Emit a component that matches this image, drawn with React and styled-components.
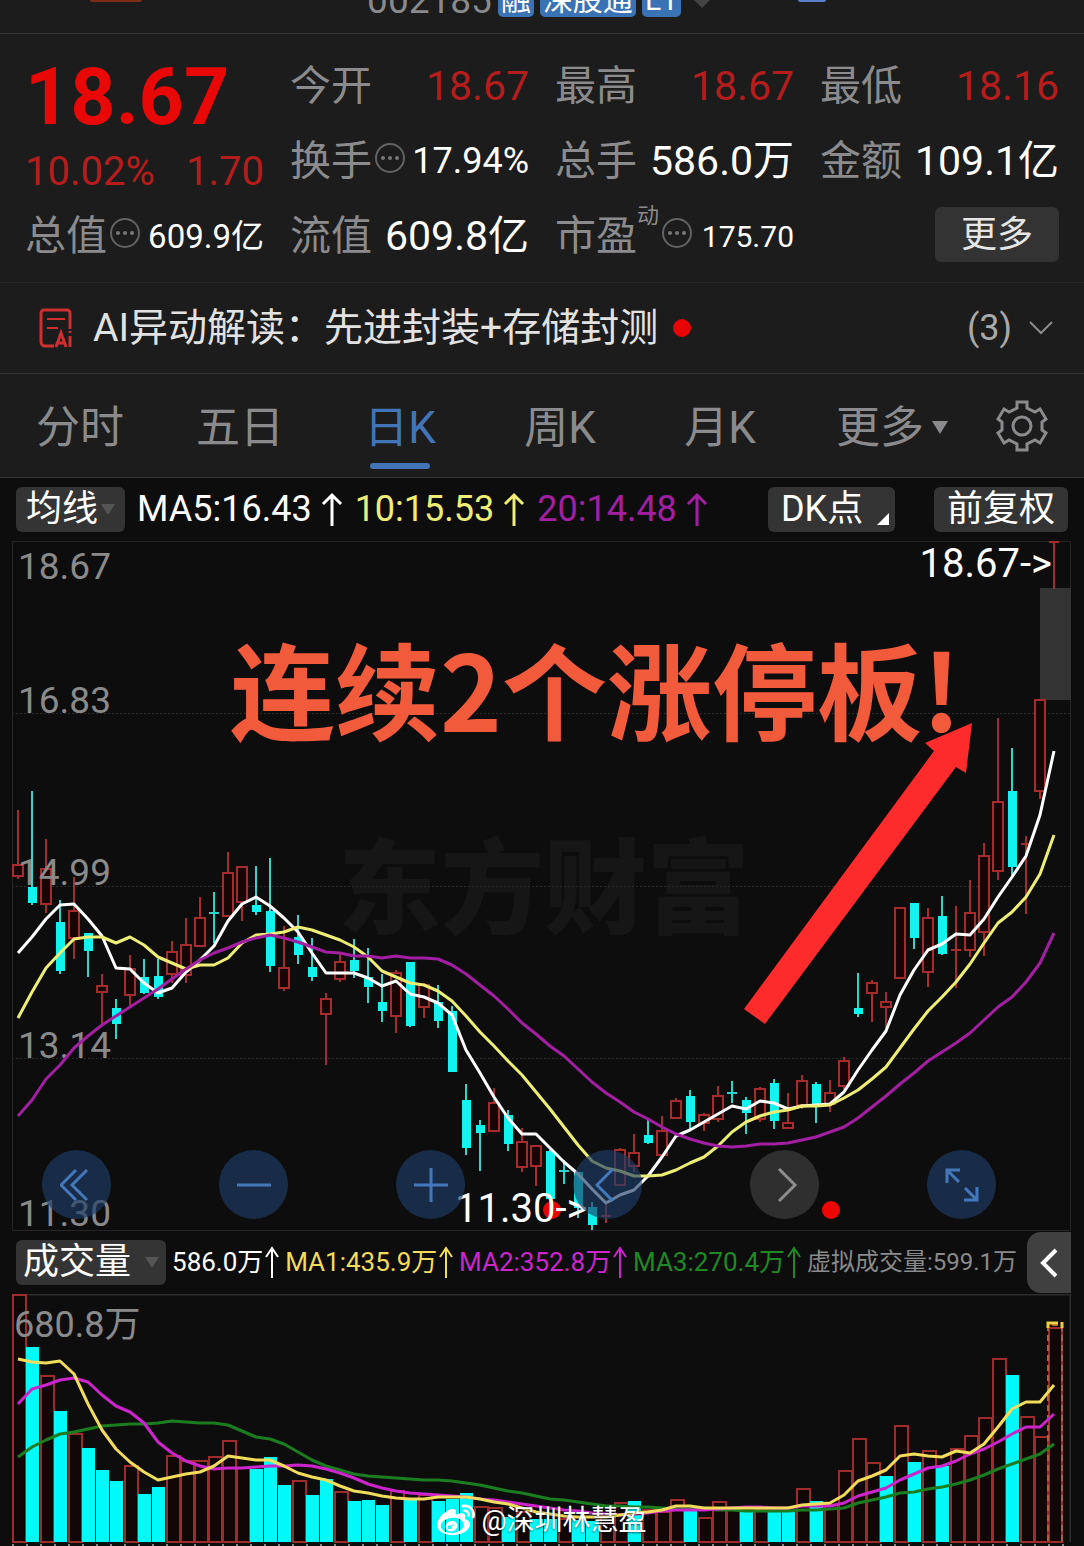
import React from 'react';
import styled, { createGlobalStyle } from 'styled-components';
import { FaWeibo } from 'react-icons/fa';

const GlobalStyle = createGlobalStyle`
	* {
		box-sizing: border-box;
	}
	body {
		margin: 0;
		background: #0d0d0d;
		color: #fff;
		font-family: Roboto, "Noto Sans CJK SC", sans-serif;
	}
	button {
		font-family: inherit;
		border: none;
		padding: 0;
		cursor: pointer;
	}
`;

const Page = styled.main`
	overflow: hidden;
`;

/* ---------- title bar ---------- */

const TitleBar = styled.header`
	display: flex;
	align-items: flex-end;
	justify-content: center;
	gap: 6px;
	height: 34px;
	padding: 0 6px 16px 0;
	background: #1c1c1c;
	border-bottom: 1px solid #343434;
	overflow: hidden;
	position: relative;
`;

const StockCode = styled.span`
	color: #8a8a8c;
	font-size: 37px;
	line-height: 40px;
	margin-bottom: -4px;
`;

const Badge = styled.span`
	padding: 0 3px;
	border-radius: 5px;
	background: #3a73b4;
	font-size: 30px;
	line-height: 38px;
	height: 36px;
`;

const Edge = styled.i`
	position: absolute;
	top: 0;
	left: ${(props) => props.$left};
	width: ${(props) => props.$width};
	height: 2px;
	border-radius: 0 0 20px 20px;
	background: ${(props) => props.$color};
`;

const Triangle = styled.i`
	width: 0;
	height: 0;
	border-left: ${(props) => props.$size}px solid transparent;
	border-right: ${(props) => props.$size}px solid transparent;
	border-top: ${(props) => props.$drop}px solid ${(props) => props.$color};
`;

const CodeTriangle = styled(Triangle)`
	margin: 0 0 9px 6px;
`;

/* ---------- quote ---------- */

const Quote = styled.section`
	display: grid;
	grid-template-columns: repeat(4, 1fr);
	grid-template-rows: repeat(3, 75px);
	column-gap: 26px;
	padding: 13px 25px 10px;
	background: #1c1c1c;
	border-bottom: 1px solid #272727;
`;

const LastPrice = styled.div`
	grid-row: span 2;
	display: flex;
	flex-direction: column;
	justify-content: space-between;
`;

const Price = styled.strong`
	color: #e80808;
	font-size: 79px;
	font-weight: 700;
	line-height: 100px;
`;

const Change = styled.div`
	display: flex;
	justify-content: space-between;
	color: #b51d1d;
	font-size: 40px;
	line-height: 50px;
`;

const Cell = styled.div`
	display: flex;
	align-items: center;
	justify-content: space-between;
	padding-top: 4px;
	white-space: nowrap;

	svg {
		margin-bottom: 6px;
	}
`;

const Label = styled.span`
	display: flex;
	align-items: center;
	color: #8b8b8d;
	font-size: 41px;
	line-height: 71px;
`;

const Value = styled.span`
	color: ${(props) => props.$color || '#fff'};
	font-size: ${(props) => props.$size || 41}px;
	line-height: 71px;
`;

const Sup = styled.sup`
	font-size: 22px;
	line-height: 22px;
	align-self: flex-start;
	padding-top: 4px;
`;

const MoreButton = styled.button`
	align-self: center;
	justify-self: end;
	width: 124px;
	height: 55px;
	border-radius: 6px;
	background: #333;
	color: #e6e6e6;
	font-size: 36px;
	line-height: 50px;
`;

/* ---------- AI strip ---------- */

const Strip = styled.section`
	display: flex;
	align-items: center;
	height: 91px;
	padding: 0 30px 0 38px;
	background: #1c1c1c;
	border-bottom: 1px solid #343434;
	color: #e2e2e2;
	font-size: 39px;
	line-height: 56px;
`;

const StripTitle = styled.span`
	margin-left: 19px;
	white-space: nowrap;
`;

const Dot = styled.i`
	width: 18px;
	height: 18px;
	margin-left: 15px;
	border-radius: 50%;
	background: #e80505;
`;

const StripToggle = styled.button`
	display: flex;
	align-items: center;
	gap: 16px;
	margin-left: auto;
	background: none;
	color: #a9a9a9;
	font-size: 36px;
`;

/* ---------- tabs ---------- */

const Tabs = styled.nav`
	display: grid;
	grid-template-columns: repeat(5, 160fr) 184fr 76fr;
	height: 104px;
	padding-right: 24px;
	background: #1c1c1c;
	border-bottom: 1px solid #343434;
`;

const Tab = styled.button`
	position: relative;
	display: flex;
	align-items: center;
	justify-content: center;
	gap: 8px;
	padding-top: 4px;
	background: none;
	color: ${(props) => (props.$active ? '#4275b8' : '#8b8b8d')};
	font-size: 44px;
	line-height: 60px;
	white-space: nowrap;

	svg {
		margin-bottom: 4px;
	}

	&::after {
		content: '';
		display: ${(props) => (props.$active ? 'block' : 'none')};
		position: absolute;
		left: calc(50% - 30px);
		bottom: 8px;
		width: 60px;
		height: 6px;
		border-radius: 3px;
		background: #4275b8;
	}
`;

/* ---------- indicator rows ---------- */

const IndicatorBar = styled.div`
	display: flex;
	align-items: center;
	height: 63px;
	padding: 0 16px;
	white-space: nowrap;
`;

const VolumeBar = styled(IndicatorBar)`
	padding-right: 13px;
`;

const Chip = styled.button`
	position: relative;
	display: flex;
	align-items: center;
	gap: ${(props) => props.$gap || 3}px;
	height: 45px;
	padding: 0 ${(props) => props.$pad || 10}px;
	border-radius: 6px;
	background: #343434;
	color: #fff;
	font-size: 36px;
	line-height: 45px;
`;

const CornerChip = styled(Chip)`
	width: 127px;
	margin-left: auto;
	margin-right: 39px;
	padding: 0 13px;

	&::after {
		content: '';
		position: absolute;
		right: 6px;
		bottom: 7px;
		border-left: 12px solid transparent;
		border-bottom: 12px solid #fff;
	}
`;

const Average = styled.span`
	display: flex;
	align-items: center;
	gap: 6px;
	margin-left: 12px;
	color: ${(props) => props.$color};
	font-size: 36px;
	line-height: 47px;
`;

const VolumeAverages = styled.div`
	display: flex;
	flex: 1;
	justify-content: space-between;
	padding: 0 10px 0 6px;
	font-size: 26px;
	line-height: 47px;
`;

const VolumeAverage = styled.span`
	display: flex;
	align-items: center;
	color: ${(props) => props.$color};
`;

const Virtual = styled(VolumeAverage)`
	font-size: 24px;
`;

const Collapse = styled.button`
	display: flex;
	align-items: center;
	justify-content: center;
	width: 44px;
	height: 61px;
	border-radius: 14px 0 0 14px;
	background: #404040;
`;

/* ---------- charts ---------- */

const ChartArea = styled.section`
	position: relative;
	padding: 0 13px 0 12px;

	svg {
		display: block;
	}
`;

const Canvas = styled.svg`
	width: 100%;
	height: auto;
`;

const Note = styled.text`
	font-family: "Noto Sans CJK SC", sans-serif;
	font-size: 105px;
	font-weight: 700;
	fill: #f25a3c;
`;

const Controls = styled.div`
	position: absolute;
	left: 42px;
	right: 88px;
	bottom: 12px;
	display: flex;
	justify-content: space-between;
`;

const RoundButton = styled.button`
	display: flex;
	align-items: center;
	justify-content: center;
	width: 69px;
	height: 69px;
	border-radius: 50%;
	background: ${(props) => (props.$muted ? 'rgba(56, 56, 56, .8)' : 'rgba(30, 62, 104, .65)')};
	color: ${(props) => (props.$muted ? '#8d8d8d' : '#4478bd')};
`;

const Author = styled.div`
	position: absolute;
	left: 0;
	right: 0;
	bottom: 4px;
	display: flex;
	align-items: center;
	justify-content: center;
	gap: 6px;
	font-size: 28px;
	line-height: 42px;
	text-shadow: 0 1px 2px rgba(0, 0, 0, .6);
`;

const STEP = 14;
const FIRST = 6;
const xAt = (i) => FIRST + i * STEP;
const toPoints = (list) => list.map((y, i) => `${xAt(i)},${y}`).join(' ');

// [rising, high, body top, body bottom, low], y in chart units
const candles = [
	[1, 269, 324, 335, 338], [0, 250, 346, 362, 364], [1, 298, 328, 363, 372], [0, 359, 381, 430, 433], [1, 336, 370, 397, 418],
	[0, 392, 392, 410, 436], [1, 433, 445, 451, 484], [0, 458, 467, 483, 498], [1, 414, 428, 454, 465], [0, 418, 436, 452, 453],
	[0, 418, 435, 456, 458], [1, 400, 411, 433, 442], [1, 377, 404, 434, 442], [1, 356, 377, 405, 405], [0, 351, 372, 373, 402],
	[1, 311, 332, 375, 376], [1, 326, 326, 361, 380], [0, 325, 364, 371, 374], [0, 317, 370, 425, 431], [1, 385, 427, 447, 450],
	[0, 374, 396, 414, 423], [0, 397, 426, 436, 440], [1, 452, 458, 473, 524], [1, 411, 421, 438, 441], [0, 398, 419, 430, 437],
	[0, 407, 436, 446, 462], [0, 433, 461, 470, 481], [1, 429, 432, 475, 492], [0, 421, 421, 485, 486], [1, 442, 444, 466, 477],
	[0, 444, 461, 480, 487], [0, 465, 470, 531, 531], [0, 543, 559, 607, 614], [0, 579, 584, 592, 630], [1, 547, 562, 590, 590],
	[0, 569, 574, 603, 610], [1, 587, 601, 626, 631], [1, 605, 605, 625, 645], [0, 609, 610, 658, 658], [0, 619, 630, 631, 643],
	[0, 631, 631, 667, 677], [0, 661, 666, 684, 689], [1, 663, 675, 676, 682], [1, 607, 609, 644, 644], [1, 593, 612, 625, 631],
	[0, 579, 594, 602, 603], [1, 575, 590, 614, 614], [1, 557, 560, 577, 578], [0, 549, 555, 581, 589], [1, 572, 574, 582, 590],
	[1, 545, 555, 578, 581], [0, 540, 552, 553, 562], [0, 556, 559, 572, 593], [1, 546, 548, 578, 581], [0, 538, 542, 580, 588],
	[1, 552, 582, 587, 587], [1, 534, 540, 564, 568], [0, 541, 543, 563, 582], [1, 539, 552, 563, 571], [1, 516, 520, 545, 549],
	[0, 432, 467, 473, 476], [1, 439, 442, 452, 481], [1, 451, 461, 466, 487], [1, 367, 367, 437, 437], [0, 362, 362, 397, 408],
	[1, 367, 377, 431, 446], [0, 355, 375, 413, 414], [1, 365, 409, 410, 447], [1, 339, 372, 409, 416], [1, 302, 315, 391, 415],
	[1, 177, 261, 330, 339], [0, 207, 250, 326, 334], [1, 295, 303, 304, 373], [1, 159, 159, 250, 258], [1, 0, 1, 1, 48],
];

const ma5 = [
	412, 396, 378, 364, 363, 378, 395, 427, 428, 442, 452, 447, 431, 419, 405, 380, 363, 356, 365, 377, 391, 412, 432, 432, 432,
	437, 445, 440, 453, 456, 462, 474, 509, 532, 556, 577, 593, 593, 607, 621, 633, 648, 662, 654, 649, 635, 616, 595, 589, 581,
	573, 565, 568, 560, 562, 568, 565, 564, 563, 551, 529, 509, 490, 454, 429, 409, 403, 393, 394, 378, 356, 336, 315, 274, 210,
];

const ma10 = [
	477, 451, 427, 412, 398, 396, 396, 402, 396, 404, 416, 422, 428, 424, 424, 417, 402, 394, 393, 391, 386, 389, 394, 399, 406,
	416, 430, 436, 442, 444, 450, 460, 475, 491, 505, 520, 534, 551, 568, 586, 604, 620, 627, 630, 635, 635, 634, 629, 622, 616,
	605, 591, 581, 575, 571, 569, 565, 565, 564, 557, 549, 538, 526, 507, 488, 470, 456, 441, 423, 402, 382, 371, 356, 333, 294,
];

const ma20 = [
	575, 559, 538, 524, 507, 495, 484, 475, 466, 457, 448, 438, 428, 419, 412, 407, 401, 397, 394, 397, 401, 406, 411, 412, 415,
	415, 417, 415, 417, 417, 418, 424, 433, 444, 455, 468, 482, 493, 505, 515, 528, 541, 552, 561, 571, 578, 586, 593, 598, 602,
	605, 606, 605, 603, 603, 602, 599, 596, 591, 586, 577, 566, 555, 543, 532, 520, 511, 502, 492, 479, 466, 456, 441, 422, 392,
];

// top of every bar; falling days are listed in volumeDown
const volumes = [
	3, 57, 87, 123, 147, 162, 185, 196, 181, 210, 202, 170, 175, 175, 171, 155, 183, 184, 171, 200, 196, 211, 194, 207, 217,
	216, 221, 206, 216, 211, 217, 215, 208, 223, 224, 233, 228, 235, 235, 235, 237, 238, 230, 219, 217, 226, 228, 216, 225, 234,
	218, 225, 228, 226, 228, 228, 204, 217, 221, 186, 153, 177, 191, 139, 176, 165, 181, 163, 149, 131, 70, 86, 130, 150, 37,
];

const volumeDown = new Set([
	1, 3, 5, 6, 7, 9, 10, 17, 18, 19, 21, 22, 24, 25, 26, 28, 30, 31, 32, 35, 37, 38, 40, 41, 44, 48, 52, 54, 55, 57, 62, 64, 66, 71,
]);

const volumeMa1 = [
	70, 73, 74, 72, 85, 116, 143, 163, 176, 187, 195, 192, 189, 187, 180, 170, 172, 174, 174, 180, 188, 192, 195, 201, 206,
	209, 212, 214, 215, 215, 213, 213, 213, 215, 218, 220, 224, 228, 230, 232, 233, 233, 233, 231, 229, 228, 226, 222, 222, 224,
	224, 224, 224, 224, 224, 224, 221, 220, 219, 211, 196, 191, 185, 170, 168, 170, 171, 165, 167, 158, 140, 121, 114, 114, 96,
];

const volumeMa2 = [
	116, 101, 96, 91, 89, 93, 107, 118, 124, 136, 156, 167, 175, 181, 184, 183, 183, 182, 181, 180, 179, 181, 184, 188, 193,
	199, 203, 206, 208, 210, 211, 212, 213, 215, 216, 218, 220, 222, 224, 226, 227, 229, 230, 231, 230, 229, 227, 226, 226, 226,
	225, 224, 223, 223, 224, 224, 222, 222, 222, 219, 212, 207, 203, 195, 189, 183, 180, 175, 168, 163, 156, 147, 140, 140, 127,
];

const volumeMa3 = [
	171, 161, 154, 147, 145, 142, 139, 138, 137, 137, 136, 134, 135, 136, 136, 138, 144, 150, 152, 158, 166, 174, 180, 185, 189,
	191, 192, 193, 194, 195, 195, 196, 198, 200, 203, 206, 209, 212, 215, 216, 218, 220, 222, 222, 223, 223, 224, 225, 225, 225,
	226, 226, 227, 227, 227, 227, 226, 226, 225, 224, 219, 216, 213, 209, 207, 204, 202, 199, 195, 190, 184, 178, 173, 168, 158,
];

const VOLUME_BASE = 248;
const volumeY = (y) => Math.round(y * 0.964 - 2);

const priceScale = [
	{ text: '18.67', y: 38 },
	{ text: '16.83', y: 172 },
	{ text: '14.99', y: 344 },
	{ text: '13.14', y: 517 },
	{ text: '11.30', y: 685 },
];

const Candle = ({ index, data }) => {
	const [rising, high, top, bottom, low] = data;
	const x = xAt(index);
	const height = bottom - top;
	if (height < 2) {
		const color = rising ? '#a52c2c' : '#2fd0cd';
		return <path d={`M${x} ${high}V${low}M${x - 5} ${top}h10`} stroke={color} strokeWidth="2" fill="none" />;
	}
	if (rising) {
		return (
			<g stroke="#a52c2c" strokeWidth="2" fill="#180606">
				<path d={`M${x} ${high}V${top}M${x} ${bottom}V${low}`} />
				<rect x={x - 5} y={top} width="10" height={height} />
			</g>
		);
	}
	return (
		<g>
			<path d={`M${x} ${high}V${low}`} stroke="#3ccfcb" strokeWidth="2" />
			<rect x={x - 4} y={top} width="9" height={height} fill="#12f2ee" />
		</g>
	);
};

const PriceChart = () => (
	<Canvas viewBox="0 0 1059 690" role="img" aria-label="日K">
		<text x="326" y="385" fontSize="103" fontWeight="900" fill="#161616">东方财富</text>
		<g stroke="#2b2b2b" strokeDasharray="2 2">
			<path d="M0 172.500H1059M0 345.500H1059M0 517.500H1059" />
		</g>
		<path d="M.5 689V.5H1058.500V689.500H.5" fill="none" stroke="#262626" />
		<rect x="1028" y="47" width="31" height="112" fill="#333" />
		{candles.map((data, i) => <Candle key={i} index={i} data={data} />)}
		<g fontSize="37" fill="#8a8a8a">
			{priceScale.map((row) => <text key={row.text} x="6" y={row.y}>{row.text}</text>)}
		</g>
		<g fill="none" strokeWidth="3" strokeLinejoin="round">
			<polyline points={toPoints(ma5)} stroke="#fff" />
			<polyline points={toPoints(ma10)} stroke="#eeee76" />
			<polyline points={toPoints(ma20)} stroke="#a21fa2" />
		</g>
		<circle cx="540" cy="669" r="9" fill="#e80505" />
		<circle cx="819" cy="669" r="9" fill="#f00505" />
		<g fontSize="40" fill="#fff">
			<text x="1040" y="36" textAnchor="end">18.67-&gt;</text>
			<text x="443" y="681">11.30-&gt;</text>
		</g>
		<Note x="218" y="191">连续2个涨停板!</Note>
		<polygon points="960,182 913,202 922,210 732,468 753,483 944,226 954,232" fill="#fd2b2b" />
	</Canvas>
);

const VolumeChart = () => (
	<Canvas viewBox="0 0 1059 252" role="img" aria-label="成交量">
		<path d="M.5 248V.5H1058.500V248" fill="none" stroke="#2c2c2c" strokeWidth="2" />
		{volumes.map(volumeY).map((top, i) => (volumeDown.has(i)
			? <rect key={i} x={xAt(i) - 6} y={top} width="13" height={VOLUME_BASE - top} fill="#00fafa" />
			: <rect key={i} x={xAt(i) - 5} y={top} width="13" height={VOLUME_BASE - top} fill="#120707" stroke="#9e2c2c" strokeWidth="2" />
		))}
		<path d="M1036 247V31H1050V247" fill="none" stroke="#b0603c" strokeWidth="2" strokeDasharray="6 4" />
		<path d="M1036 34V29H1046M1050 34V28" fill="none" stroke="#f0d040" strokeWidth="3" />
		<text x="2" y="43" fontSize="36" fill="#8a8a8a">680.8万</text>
		<g fill="none" strokeWidth="3" strokeLinejoin="round">
			<polyline points={toPoints(volumeMa3.map(volumeY))} stroke="#1c7d20" />
			<polyline points={toPoints(volumeMa2.map(volumeY))} stroke="#cc25cc" />
			<polyline points={toPoints(volumeMa1.map(volumeY))} stroke="#f2dc5c" />
		</g>
		<path d="M0 251H1059" stroke="#8a8a8a" strokeWidth="2" strokeDasharray="2 12" />
	</Canvas>
);

const MoreDots = () => (
	<svg width="34" height="34" viewBox="0 0 34 34" fill="#77777a">
		<circle cx="18" cy="16" r="14" fill="none" stroke="#636365" strokeWidth="2" />
		<circle cx="11" cy="16" r="2" />
		<circle cx="18" cy="16" r="2" />
		<circle cx="25" cy="16" r="2" />
	</svg>
);

const AiIcon = () => (
	<svg width="36" height="40" viewBox="0 0 36 40" fill="none" stroke="#cf2f2f" strokeWidth="3">
		<path d="M32 21V5a3 3 0 0 0-3-3H6a3 3 0 0 0-3 3v29a4 4 0 0 0 4 4h9" />
		<path d="M9 11h18M9 20h11" strokeWidth="2" />
		<path d="M18 39l5-14 5 14M20 35h6M32 28v11M32 23v2" />
	</svg>
);

const GearIcon = () => (
	<svg width="54" height="54" viewBox="0 0 54 54" fill="none" stroke="#8b8b8d" strokeWidth="3">
		<path d="M22 3H32V9L40 13L45 10L51 20L47 23V31L51 34L45 44L40 41L32 45V51H22V45L14 41L9 44L3 34L7 31V23L3 20L9 10L14 13L22 9Z" />
		<circle cx="27" cy="27" r="9" />
	</svg>
);

const UpArrow = () => (
	<svg width="25" height="36" viewBox="0 0 25 36" fill="none" stroke="currentColor" strokeWidth="3">
		<path d="M14 34V3M5 12L14 3L23 12" />
	</svg>
);

const SlimArrow = () => (
	<svg width="16" height="36" viewBox="0 0 16 36" fill="none" stroke="currentColor" strokeWidth="2">
		<path d="M9 33V3M3 12L9 3L15 12" />
	</svg>
);

const controls = [
	{ label: '最左', d: 'M16 2L1 17L16 32M27 2L12 17L27 32' },
	{ label: '缩小', d: 'M0 17H34' },
	{ label: '放大', d: 'M0 17H34M17 0V34' },
	{ label: '左移', d: 'M22 1L6 17L22 33' },
	{ label: '右移', d: 'M11 1L27 17L11 33', muted: true },
	{ label: '全屏', d: 'M14 14L2 2M2 15V2H15M20 20L32 32M32 19V32H19' },
];

const App = () => (
	<Page>
		<GlobalStyle />
		<TitleBar>
			<Edge $left="90px" $width="52px" $color="#7d2c1a" />
			<StockCode>002185</StockCode>
			<Badge>融</Badge>
			<Badge>深股通</Badge>
			<Badge>L1</Badge>
			<CodeTriangle $size={9} $drop={9} $color="#444" />
			<Edge $left="798px" $width="28px" $color="#5b7fc6" />
		</TitleBar>

		<Quote>
			<LastPrice>
				<Price>18.67</Price>
				<Change><span>10.02%</span><span>1.70</span></Change>
			</LastPrice>
			<Cell><Label>今开</Label><Value $color="#b51d1d">18.67</Value></Cell>
			<Cell><Label>最高</Label><Value $color="#b51d1d">18.67</Value></Cell>
			<Cell><Label>最低</Label><Value $color="#b51d1d">18.16</Value></Cell>
			<Cell><Label>换手<MoreDots /></Label><Value $size={36}>17.94%</Value></Cell>
			<Cell><Label>总手</Label><Value>586.0万</Value></Cell>
			<Cell><Label>金额</Label><Value>109.1亿</Value></Cell>
			<Cell><Label>总值<MoreDots /></Label><Value $size={33}>609.9亿</Value></Cell>
			<Cell><Label>流值</Label><Value>609.8亿</Value></Cell>
			<Cell><Label>市盈<Sup>动</Sup><MoreDots /></Label><Value $size={30}>175.70</Value></Cell>
			<MoreButton>更多</MoreButton>
		</Quote>

		<Strip>
			<AiIcon />
			<StripTitle>AI异动解读：先进封装+存储封测</StripTitle>
			<Dot />
			<StripToggle>
				(3)
				<svg width="26" height="16" viewBox="0 0 26 16" fill="none" stroke="#8b8b8d" strokeWidth="2">
					<path d="M2 2L13 13L24 2" />
				</svg>
			</StripToggle>
		</Strip>

		<Tabs>
			<Tab>分时</Tab>
			<Tab>五日</Tab>
			<Tab $active>日K</Tab>
			<Tab>周K</Tab>
			<Tab>月K</Tab>
			<Tab>更多<Triangle $size={8} $drop={13} $color="#8b8b8d" /></Tab>
			<Tab aria-label="设置"><GearIcon /></Tab>
		</Tabs>

		<IndicatorBar>
			<Chip>均线<Triangle $size={7} $drop={11} $color="#555" /></Chip>
			<Average $color="#fff">MA5:16.43<UpArrow /></Average>
			<Average $color="#eeee76">10:15.53<UpArrow /></Average>
			<Average $color="#a21fa2">20:14.48<UpArrow /></Average>
			<CornerChip>DK点</CornerChip>
			<Chip $pad={13}>前复权</Chip>
		</IndicatorBar>

		<ChartArea>
			<PriceChart />
			<Controls>
				{controls.map((item) => (
					<RoundButton key={item.label} aria-label={item.label} $muted={item.muted}>
						<svg width="34" height="34" viewBox="0 0 34 34" fill="none" stroke="currentColor" strokeWidth="3">
							<path d={item.d} />
						</svg>
					</RoundButton>
				))}
			</Controls>
		</ChartArea>

		<VolumeBar>
			<Chip $pad={7} $gap={14}>成交量<Triangle $size={7} $drop={11} $color="#555" /></Chip>
			<VolumeAverages>
				<VolumeAverage $color="#fff">586.0万<SlimArrow /></VolumeAverage>
				<VolumeAverage $color="#f2dc5c">MA1:435.9万<SlimArrow /></VolumeAverage>
				<VolumeAverage $color="#cc25cc">MA2:352.8万<SlimArrow /></VolumeAverage>
				<VolumeAverage $color="#1f8a23">MA3:270.4万<SlimArrow /></VolumeAverage>
				<Virtual $color="#8a8a8a">虚拟成交量:599.1万</Virtual>
			</VolumeAverages>
			<Collapse aria-label="展开">
				<svg width="18" height="30" viewBox="0 0 18 30" fill="none" stroke="#fff" strokeWidth="4">
					<path d="M16 2L3 15L16 28" />
				</svg>
			</Collapse>
		</VolumeBar>

		<ChartArea>
			<VolumeChart />
			<Author><FaWeibo size={38} />@深圳林慧盈</Author>
		</ChartArea>
	</Page>
);

export default App;
